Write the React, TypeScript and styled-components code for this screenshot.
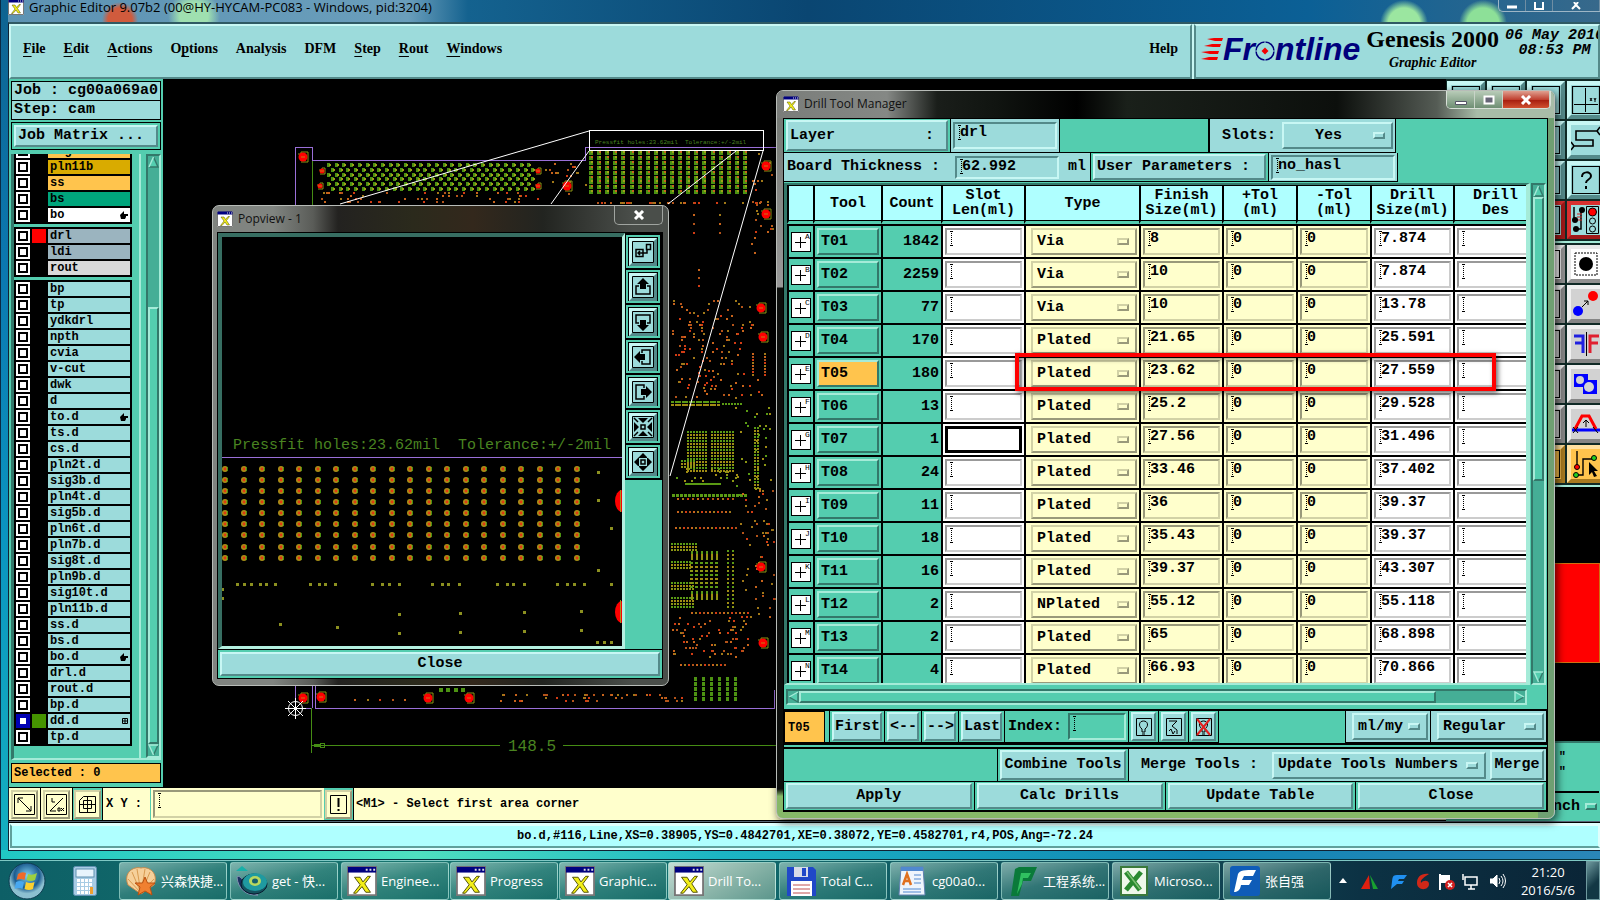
import { ReactNode } from 'react';
import { createGlobalStyle, css, styled } from 'styled-components';

const TEAL = '#54cdaf';
const TEAL_LIGHT = '#a5ebd8';
const TEAL_DARK = '#33786a';
const CYAN = '#9cdbdb';
const CYAN_LIGHT = '#c8f7f4';
const CYAN_DARK = '#548a8a';
const AQUA = '#afffff';
const CREAM = '#ffffcc';
const GOLD = '#ffc44d';

type Tone = 'cyan' | 'teal' | 'cream' | 'white' | 'gold';

const tones: Record<Tone, { bg: string; light: string; dark: string }> = {
  cyan: { bg: CYAN, light: CYAN_LIGHT, dark: CYAN_DARK },
  teal: { bg: TEAL, light: TEAL_LIGHT, dark: TEAL_DARK },
  cream: { bg: CREAM, light: '#d2d2a6', dark: '#99997a' },
  white: { bg: '#ffffff', light: '#cccccc', dark: '#999999' },
  gold: { bg: GOLD, light: TEAL_LIGHT, dark: TEAL_DARK },
};

const raised = (tone: Tone) => css`
  background: ${tones[tone].bg};
  border: 2px solid;
  border-color: ${tones[tone].light} ${tones[tone].dark} ${tones[tone].dark} ${tones[tone].light};
`;

const sunken = (tone: Tone) => css`
  background-color: ${tones[tone].bg};
  border: 2px solid;
  border-color: ${tones[tone].dark} ${tones[tone].light} ${tones[tone].light} ${tones[tone].dark};
`;

const GlobalStyle = createGlobalStyle`
  *,
  *::before,
  *::after {
    box-sizing: border-box;
  }

  body {
    margin: 0;
    background: #0b4f6e;
    color: #000;
    font: bold 15px/18px 'Liberation Mono', monospace;
  }

  button,
  input,
  select {
    margin: 0;
    padding: 0;
    border: 0;
    border-radius: 0;
    background: none;
    color: inherit;
    font: inherit;
    outline: none;
  }

  button {
    cursor: pointer;
  }
`;

/* ---------- data ---------- */

interface Layer {
  name: string;
  color?: string;
  swatch?: string;
  mark?: 'hand' | 'grid';
  active?: boolean;
}

const layerGroups: Layer[][] = [
  [
    { name: 'sig10t', color: GOLD },
    { name: 'pln11b', color: '#d9ab00' },
    { name: 'ss', color: GOLD },
    { name: 'bs', color: '#00a57c' },
    { name: 'bo', color: '#ffffff', mark: 'hand' },
  ],
  [
    { name: 'drl', color: '#9bb4bf', swatch: '#ff0000' },
    { name: 'ldi', color: '#9bb4bf' },
    { name: 'rout', color: '#d9d9d9' },
  ],
  [
    { name: 'bp' },
    { name: 'tp' },
    { name: 'ydkdrl' },
    { name: 'npth' },
    { name: 'cvia' },
    { name: 'v-cut' },
    { name: 'dwk' },
    { name: 'd' },
    { name: 'to.d', mark: 'hand' },
    { name: 'ts.d' },
    { name: 'cs.d' },
    { name: 'pln2t.d' },
    { name: 'sig3b.d' },
    { name: 'pln4t.d' },
    { name: 'sig5b.d' },
    { name: 'pln6t.d' },
    { name: 'pln7b.d' },
    { name: 'sig8t.d' },
    { name: 'pln9b.d' },
    { name: 'sig10t.d' },
    { name: 'pln11b.d' },
    { name: 'ss.d' },
    { name: 'bs.d' },
    { name: 'bo.d', mark: 'hand' },
    { name: 'drl.d' },
    { name: 'rout.d' },
    { name: 'bp.d' },
    { name: 'dd.d', swatch: '#459400', mark: 'grid', active: true },
    { name: 'tp.d' },
  ],
];

const menus: [string, number][] = [
  ['File', 0],
  ['Edit', 0],
  ['Actions', 0],
  ['Options', 1],
  ['Analysis', -1],
  ['DFM', -1],
  ['Step', 0],
  ['Rout', 0],
  ['Windows', 0],
];

const tools = [
  { id: 'T01', count: 1842, type: 'Via', finish: '8', drill: '7.874' },
  { id: 'T02', count: 2259, type: 'Via', finish: '10', drill: '7.874' },
  { id: 'T03', count: 77, type: 'Via', finish: '10', drill: '13.78' },
  { id: 'T04', count: 170, type: 'Plated', finish: '21.65', drill: '25.591' },
  { id: 'T05', count: 180, type: 'Plated', finish: '23.62', drill: '27.559' },
  { id: 'T06', count: 13, type: 'Plated', finish: '25.2', drill: '29.528' },
  { id: 'T07', count: 1, type: 'Plated', finish: '27.56', drill: '31.496' },
  { id: 'T08', count: 24, type: 'Plated', finish: '33.46', drill: '37.402' },
  { id: 'T09', count: 11, type: 'Plated', finish: '36', drill: '39.37' },
  { id: 'T10', count: 18, type: 'Plated', finish: '35.43', drill: '39.37' },
  { id: 'T11', count: 16, type: 'Plated', finish: '39.37', drill: '43.307' },
  { id: 'T12', count: 2, type: 'NPlated', finish: '55.12', drill: '55.118' },
  { id: 'T13', count: 2, type: 'Plated', finish: '65', drill: '68.898' },
  { id: 'T14', count: 4, type: 'Plated', finish: '66.93', drill: '70.866' },
];

const CURRENT_TOOL = 'T05';
const FOCUSED_TOOL = 'T07';

/* ---------- shared controls ---------- */

const BevelButton = styled.button<{ $tone?: Tone }>`
  ${({ $tone = 'cyan' }) => raised($tone)}
  display: flex;
  align-items: center;
  justify-content: center;
  min-width: 0;
  white-space: pre;
`;

const TextField = styled.input<{ $tone?: Tone; $focused?: boolean }>`
  ${({ $tone = 'cyan' }) => sunken($tone)}
  display: block;
  width: 100%;
  height: 27px;
  min-width: 0;
  padding: 0 2px 6px 5px;
  background-image: ${({ $focused }) =>
    $focused
      ? 'none'
      : `linear-gradient(#000, #000), linear-gradient(#000, #000),
         repeating-linear-gradient(#000 0 1px, transparent 1px 2px)`};
  background-repeat: no-repeat;
  background-size: 3px 1px, 3px 1px, 1px 14px;
  background-position: 3px 1px, 3px 15px, 4px 1px;
  ${({ $focused }) => $focused && 'border: 3px solid #000;'}
`;

const MenuBox = styled.span<{ $tone?: Tone }>`
  ${({ $tone = 'cyan' }) => raised($tone)}
  display: flex;
  align-items: center;
  gap: 4px;
  height: 27px;
  padding: 0 6px 0 4px;

  &::after {
    content: '';
    flex: none;
    width: 12px;
    height: 7px;
    ${({ $tone = 'cyan' }) => raised($tone)}
  }
`;

const MenuSelect = styled.select<{ $center?: boolean }>`
  appearance: none;
  flex: 1;
  width: 100%;
  min-width: 0;
  text-align-last: ${({ $center }) => ($center ? 'center' : 'left')};
`;

interface OptionMenuProps {
  label: string;
  value: string;
  tone?: Tone;
  center?: boolean;
}

function OptionMenu({ label, value, tone, center }: OptionMenuProps) {
  return (
    <MenuBox $tone={tone}>
      <MenuSelect aria-label={label} $center={center}>
        <option>{value}</option>
      </MenuSelect>
    </MenuBox>
  );
}

const Scroll = styled.div<{ $horizontal?: boolean }>`
  ${sunken('teal')}
  display: flex;
  flex: none;
  flex-direction: ${({ $horizontal }) => ($horizontal ? 'row' : 'column')};
  ${({ $horizontal }) => ($horizontal ? 'height: 16px;' : 'width: 15px;')}
  background-color: #45ae96;
`;

const Thumb = styled.div<{ $grow: number }>`
  ${raised('teal')}
  flex: ${({ $grow }) => $grow} 1 0;
`;

const Track = styled.div<{ $grow: number }>`
  flex: ${({ $grow }) => $grow} 1 0;
`;

const arrows = {
  up: ['M5.5 1 L1 11 H10 Z', 'M5.5 1 L1 11', 'M1 11 H10 L5.5 1'],
  down: ['M5.5 11 L1 1 H10 Z', 'M5.5 11 L1 1 H10', 'M10 1 L5.5 11'],
  left: ['M1 6 L10 1 V11 Z', 'M1 6 L10 1', 'M10 1 V11 L1 6'],
  right: ['M10 6 L1 1 V11 Z', 'M10 6 L1 1 V11', 'M1 11 L10 6'],
};

function Arrow({ to }: { to: keyof typeof arrows }) {
  const [fill, light, dark] = arrows[to];
  return (
    <svg width="11" height="12" viewBox="0 0 11 12">
      <path d={fill} fill={TEAL} />
      <path d={dark} fill="none" stroke={TEAL_DARK} strokeWidth="1.4" />
      <path d={light} fill="none" stroke={TEAL_LIGHT} strokeWidth="1.4" />
    </svg>
  );
}

interface ScrollBarProps {
  before: number;
  thumb: number;
  after: number;
  horizontal?: boolean;
}

function ScrollBar({ before, thumb, after, horizontal }: ScrollBarProps) {
  return (
    <Scroll $horizontal={horizontal}>
      <Arrow to={horizontal ? 'left' : 'up'} />
      <Track $grow={before} />
      <Thumb $grow={thumb} />
      <Track $grow={after} />
      <Arrow to={horizontal ? 'right' : 'down'} />
    </Scroll>
  );
}

function AppIcon({ size = 16 }: { size?: number }) {
  return (
    <svg width={size} height={size} viewBox="0 0 32 32">
      <rect x="0" y="0" width="32" height="32" fill="#fff" />
      <path d="M1 1 V31 H31 V1 Z" fill="none" stroke="#777" strokeWidth="2" />
      <rect x="1" y="1" width="30" height="6" fill="#000080" />
      <path d="M20 3 h2 v2 h-2 z M24 3 h2 v2 h-2 z M28 3 h2 v2 h-2 z" fill="#ddd" />
      <path
        d="M8 12 H14 L17 17 L22 11 H25 L19 19 L25 28 H20 L16 22 L10 29 H7 L14 20 Z"
        fill="#f2ee18"
        stroke="#4a4a00"
      />
    </svg>
  );
}

/* ---------- editor window ---------- */

const Desktop = styled.div`
  position: relative;
  display: flex;
  flex-direction: column;
  height: 100vh;
  overflow: hidden;
  background: linear-gradient(#0e6390 0%, #0b78b0 30%, #0a95c0 60%, #16b4c0 100%);
`;

const EditorWindow = styled.main`
  display: flex;
  flex: 1;
  flex-direction: column;
  min-height: 0;
  padding: 0 0 8px 7px;
  border-left: 1px solid #0a2a44;
  border-bottom: 1px solid #06323c;
  background: linear-gradient(90deg, #20c8c4, #4fe0c0 26%, #1cb5c4 45%, #1186b4 75%, #2a86b8) bottom / 100% 9px
    no-repeat;
`;

const EditorTitle = styled.header`
  display: flex;
  flex: none;
  align-items: center;
  gap: 5px;
  height: 22px;
  padding: 0 0 8px 0;
  font: 13px/14px 'Open Sans', sans-serif;
  background: radial-gradient(circle at 112px 20px, #d05b3d 0 12px, transparent 18px),
    radial-gradient(circle at 186px 16px, #9fe0b0 0 14px, transparent 26px),
    radial-gradient(circle at 1396px 24px, #9be6a0 0 16px, transparent 24px),
    radial-gradient(circle at 1475px 24px, #8de098 0 16px, transparent 24px),
    linear-gradient(90deg, #5d93b3 0, #6a9ebb 400px, #14628f 460px, #0a4672 800px, #0b6096 1300px, #37698b 100%);
`;

const EditorControls = styled.div`
  display: flex;
  align-self: flex-start;
  margin-left: auto;
  height: 12px;
  border: 1px solid #9db6c6;
  border-top: 0;
  border-right: 0;
  border-radius: 0 0 0 5px;
`;

const EditorControl = styled.button<{ $wide?: boolean }>`
  display: grid;
  place-items: center;
  width: ${({ $wide }) => ($wide ? 47 : 27)}px;
  border-right: 1px solid #6f8ea3;
`;

const EditorFrame = styled.div`
  display: flex;
  flex: 1;
  flex-direction: column;
  min-height: 0;
  border: 1px solid #123;
  border-top: 2px solid #2f5a64;
  border-right: 0;
  background: #000;
`;

const TopRow = styled.div`
  display: flex;
  flex: none;
  height: 55px;
  background: ${CYAN_LIGHT};
`;

const MenuBar = styled.nav`
  ${raised('cyan')}
  display: flex;
  flex: 1;
  align-items: center;
  gap: 18px;
  margin-right: 2px;
  padding: 0 12px 5px;
  font: bold 14px/20px 'Liberation Serif', serif;
`;

const MenuItem = styled.button<{ $end?: boolean }>`
  ${({ $end }) => $end && 'margin-left: auto;'}

  span {
    text-decoration: underline;
    text-underline-offset: 3px;
  }
`;

const Brand = styled.div`
  ${raised('cyan')}
  border-left: 2px solid ${CYAN_DARK};
  display: flex;
  flex: none;
  gap: 6px;
  width: 406px;
  padding-left: 5px;
  overflow: hidden;
  white-space: pre;
`;

const Logo = styled.div`
  display: flex;
  align-items: center;
  align-self: flex-start;
  color: #00007c;
  font: italic bold 32px/46px 'Liberation Sans', sans-serif;
`;

const Product = styled.div`
  display: flex;
  flex-direction: column;
  align-items: center;
  font: bold 24px/26px 'Liberation Serif', serif;
`;

const ProductSub = styled.em`
  font-size: 14px;
  line-height: 22px;
`;

const Clock = styled.div`
  padding-top: 2px;
  font-style: italic;
  line-height: 15px;
  text-align: center;
`;

function FrontlineLogo() {
  return (
    <Logo>
      <svg width="22" height="28" viewBox="0 0 22 28">
        <g fill="#f20000">
          <path d="M6 4 L13 3 H22 L21 6 H14 Z" />
          <path d="M3 11 L11 9 H20 L19 12 H12 Z" />
          <path d="M0 17 L9 16 H18 L17 19 H9 Z" />
          <path d="M0 24 L8 22 H17 L16 25 H8 Z" />
        </g>
      </svg>
      Fr
      <svg width="20" height="28" viewBox="0 0 20 28">
        <circle cx="10" cy="16" r="9" fill="none" stroke="#00007c" strokeWidth="1.5" />
        <path d="M10 6 V12 M10 20 V26 M0 16 H6 M14 16 H20" stroke="#9cdbdb" />
        <path d="M10 12.500 L13.500 16 L10 19.500 L6.500 16 Z" fill="#f20000" />
      </svg>
      ntline
    </Logo>
  );
}

const MainRow = styled.div`
  display: flex;
  flex: 1;
  min-height: 0;
`;

const LeftPart = styled.div`
  display: flex;
  flex: 1;
  flex-direction: column;
  min-width: 0;
`;

const WorkRow = styled.div`
  display: flex;
  flex: 1;
  min-height: 0;
`;

const Sidebar = styled.aside`
  display: flex;
  flex: none;
  flex-direction: column;
  width: 154px;
  padding: 2px 2px 4px;
  background: ${TEAL};
`;

const InfoBox = styled.div`
  flex: none;
  height: 20px;
  margin-bottom: -1px;
  padding-left: 2px;
  border: 1px solid #000;
  background: ${CYAN};
  white-space: pre;
`;

const MatrixBox = styled.div`
  display: grid;
  flex: none;
  height: 28px;
  margin: 3px 0 4px;
  padding: 2px;
  border: 1px solid #000;

  button {
    justify-content: flex-start;
    padding-left: 2px;
  }
`;

const LayerArea = styled.div`
  display: flex;
  flex: 1;
  gap: 5px;
  min-height: 0;
  border-left: 3px solid ${TEAL_DARK};
  border-bottom: 2px solid ${TEAL_LIGHT};
`;

/* anchored to its last row, so the first group runs out of the top */
const LayerView = styled.div`
  display: flex;
  flex: 1;
  flex-direction: column;
  justify-content: flex-end;
  gap: 3px;
  padding-bottom: 12px;
  overflow: hidden;
  border-right: 2px solid ${TEAL_LIGHT};
  background: ${TEAL};
`;

const LayerGroup = styled.ul`
  flex: none;
  width: 118px;
  margin: 0;
  padding: 0 2px 2px;
  background: #000;
  list-style: none;
`;

const LayerRow = styled.li`
  display: grid;
  grid-template-columns: 14px 14px 1fr;
  gap: 2px;
  height: 16px;
  padding-top: 2px;
  font-size: 12px;
  line-height: 14px;
`;

const LayerCheck = styled.input<{ $active?: boolean }>`
  appearance: none;
  width: 14px;
  height: 14px;
  border: 2px solid ${({ $active }) => ($active ? '#0000b4' : '#fff')};
  background: #fff;
  box-shadow: inset 0 0 0 2px ${({ $active }) => ($active ? '#0000b4' : '#000')};
`;

const Swatch = styled.span<{ $color?: string }>`
  background: ${({ $color }) => $color ?? '#000'};
`;

const LayerName = styled.label<{ $color?: string }>`
  display: flex;
  align-items: center;
  justify-content: space-between;
  padding: 0 2px;
  background: ${({ $color }) => $color ?? CYAN};
`;

const SelectedBox = styled.div`
  flex: none;
  height: 20px;
  margin-top: 3px;
  padding-left: 2px;
  border: 1px solid #000;
  background: ${GOLD};
  font-size: 12px;
  white-space: pre;
`;

function LayerMark({ kind }: { kind: 'hand' | 'grid' }) {
  if (kind === 'grid') {
    return (
      <svg width="6" height="6" viewBox="0 0 6 6">
        <path d="M0.500 0.500 H5.500 V5.500 H0.500 Z M3 0 V6 M0 3 H6" fill="none" stroke="#000" />
      </svg>
    );
  }
  return (
    <svg width="8" height="8" viewBox="0 0 8 8">
      <path d="M0 4 L4 0 V3 H8 V5 H6 V6 L5 8 H1 Z" />
    </svg>
  );
}

function LayerPanel() {
  return (
    <Sidebar>
      <InfoBox>Job : cg00a069a0</InfoBox>
      <InfoBox>Step: cam</InfoBox>
      <MatrixBox>
        <BevelButton>Job Matrix ...</BevelButton>
      </MatrixBox>
      <LayerArea>
        <LayerView>
          {layerGroups.map((group, index) => (
            <LayerGroup key={index}>
              {group.map((layer) => (
                <LayerRow key={layer.name}>
                  <LayerCheck type="checkbox" id={`layer-${layer.name}`} $active={layer.active} />
                  <Swatch $color={layer.swatch} />
                  <LayerName htmlFor={`layer-${layer.name}`} $color={layer.color}>
                    {layer.name}
                    {layer.mark && <LayerMark kind={layer.mark} />}
                  </LayerName>
                </LayerRow>
              ))}
            </LayerGroup>
          ))}
        </LayerView>
        <ScrollBar before={141} thumb={440} after={0} />
      </LayerArea>
      <SelectedBox>Selected : 0</SelectedBox>
    </Sidebar>
  );
}

/* ---------- board drawing ---------- */

interface Dot {
  x: number;
  y: number;
  w?: number;
  h?: number;
  c: string;
}

const COPPER = ['#c8641c', '#b4541a', '#d23c14', '#a07818'];
const MASK = ['#5a9a14', '#8c9614', '#a08c14'];

function random(seed: number) {
  let s = seed * 7919;
  return () => {
    s = (s * 16807) % 2147483647;
    return s / 2147483647;
  };
}

function scatter(seed: number, x: number, y: number, w: number, h: number, n: number, colors = COPPER) {
  const next = random(seed);
  return Array.from({ length: n }, (): Dot => ({
    x: Math.round(x + next() * w),
    y: Math.round(y + Math.floor((next() * h) / 3) * 3),
    c: colors[Math.floor(next() * colors.length)],
  }));
}

function matrix(x: number, y: number, cols: number, rows: number, dx: number, dy: number, w: number, h: number, colors = MASK) {
  const dots: Dot[] = [];
  for (let r = 0; r < rows; r++) {
    for (let c = 0; c < cols; c++) {
      dots.push({ x: Math.round(x + c * dx), y: Math.round(y + r * dy), w, h, c: colors[(r * 5 + c * 3) % colors.length] });
    }
  }
  return dots;
}

const GREEN = ['#4c9212'];

const connector = [165, 170, 175, 179, 184, 189].flatMap((y, r) => [
  ...matrix(r % 2 ? 331 : 327, y - 2, 27, 1, 7.7, 1, 3, 4, GREEN),
  ...matrix(r % 2 ? 333 : 329, y - 1, 27, 1, 7.7, 1, 2, 2, ['#a0a018', '#c8641c', '#5a9a14']),
]);

const pressfit = [...matrix(589, 151, 20, 9, 8.1, 4.9, 4, 4, GREEN), ...matrix(591, 151, 20, 9, 8.1, 4.9, 2, 2, ['#a0a018', '#c8641c'])];

const boardDots: Dot[] = [
  ...connector,
  ...pressfit,
  ...scatter(7, 316, 192, 232, 12, 60),
  ...scatter(11, 545, 163, 42, 38, 18),
  ...scatter(12, 590, 202, 170, 3, 34),
  ...matrix(693, 214, 2, 3, 26, 9, 2, 2, COPPER),
  ...matrix(698, 269, 1, 3, 1, 8, 2, 2, COPPER),
  ...scatter(15, 750, 150, 22, 110, 26),
  ...scatter(19, 672, 300, 80, 34, 46),
  ...scatter(23, 672, 330, 70, 36, 54),
  ...scatter(24, 672, 360, 34, 38, 22),
  ...matrix(752, 353, 2, 8, 12, 3, 2, 2, COPPER),
  ...scatter(29, 705, 370, 66, 28, 26),
  ...matrix(671, 401, 14, 2, 3.5, 3, 3, 2),
  ...matrix(722, 403, 7, 1, 3, 3, 2, 2),
  ...scatter(31, 734, 407, 38, 90, 34, MASK),
  ...matrix(687, 431, 7, 14, 3, 3, 2, 2),
  ...matrix(711, 431, 8, 14, 3, 3, 2, 2),
  ...matrix(681, 460, 5, 3, 3, 3, 2, 2),
  ...matrix(754, 427, 2, 21, 3, 3, 2, 2),
  ...scatter(37, 672, 468, 64, 14, 22, MASK),
  ...matrix(685, 483, 12, 1, 3, 3, 3, 2),
  ...matrix(672, 494, 19, 1, 4, 3, 3, 3),
  ...matrix(677, 498, 12, 1, 5, 3, 2, 2, COPPER),
  ...matrix(677, 511, 14, 1, 4, 3, 2, 2, COPPER),
  ...matrix(675, 527, 16, 1, 4, 3, 2, 2, COPPER),
  ...scatter(41, 740, 490, 34, 130, 60),
  ...matrix(671, 543, 9, 3, 3, 3, 2, 2),
  ...matrix(671, 561, 7, 3, 3, 3, 2, 2),
  ...matrix(671, 582, 8, 3, 3, 3, 2, 2),
  ...matrix(671, 597, 8, 4, 3, 3, 2, 2),
  ...matrix(691, 551, 6, 3, 5, 3, 2, 3),
  ...matrix(690, 562, 6, 7, 5, 4, 3, 2),
  ...matrix(691, 591, 6, 3, 5, 3, 2, 3),
  ...matrix(727, 550, 2, 15, 5, 4, 2, 2),
  ...matrix(691, 612, 15, 1, 4, 3, 2, 2, COPPER),
  ...scatter(43, 671, 617, 78, 40, 74),
  ...matrix(680, 664, 12, 1, 4, 3, 2, 2, COPPER),
  ...matrix(694, 677, 6, 5, 8, 5, 3, 4, GREEN),
  ...matrix(354, 699, 5, 1, 12.6, 1, 2, 2, COPPER),
  ...scatter(47, 492, 694, 190, 8, 50),
  ...matrix(439, 688, 4, 1, 7.3, 1, 4, 4, GREEN),
];

const pads = [
  [303, 157],
  [322, 171],
  [320, 186],
  [538, 171],
  [538, 186],
  [567, 186],
  [766, 166],
  [766, 214],
  [761, 308],
  [763, 337],
  [761, 567],
  [763, 643],
  [303, 698],
  [321, 697],
  [428, 698],
  [469, 698],
];

const Canvas = styled.svg`
  flex: 1;
  min-width: 0;
  height: auto;
  background: #000;
`;

const CadText = styled.text`
  fill: #4a8420;
  font-family: 'Liberation Mono', monospace;
  font-weight: normal;
  white-space: pre;
`;

function Dots({ dots }: { dots: Dot[] }) {
  return (
    <g shapeRendering="crispEdges">
      {dots.map((d, i) => (
        <rect key={i} x={d.x} y={d.y} width={d.w ?? 2} height={d.h ?? 2} fill={d.c} />
      ))}
    </g>
  );
}

function Board() {
  return (
    <Canvas>
      <g transform="translate(-163 -79)">
        <Dots dots={boardDots} />
        {pads.map(([x, y], i) => {
          const r = i > 0 && i < 5 ? 3 : 5;
          return (
            <g key={i}>
              <path d={`M${x - r} ${y - r + 2} h3 v-2 h${r * 2 - 3} v${r * 2} h-${r + 2}`} fill="none" stroke="#8c9614" />
              <circle cx={x} cy={y} r={r - 0.500} fill="#ff0000" />
              <path d={`M${x - 2} ${y} h4`} stroke="#c87818" />
            </g>
          );
        })}
        <g fill="none" stroke="#9a6fd8" shapeRendering="crispEdges">
          <path d="M295.500 708 V147.500 H312 V160.500 H585.500 V147.500 H776" />
          <path d="M315.500 680 V708.500 H774.500 V690 M295 708.500 H312 M312.500 680 V708" />
        </g>
        <g fill="none" stroke="#fff">
          <path d="M589.500 130.500 H763.500 V150.500 H589.500 Z" shapeRendering="crispEdges" />
          <path d="M589 131 L340 204 M589 151 L551 204 M736 151 L668 204 M763 151 L670 476" />
          <circle cx="295.500" cy="708.500" r="7" />
          <path d="M285 708.500 H306 M295.500 698 V719 M288 701 L303 716 M303 701 L288 716" />
        </g>
        <CadText x="595" y="144" fontSize="6">
          {'Pressfit holes:23.62mil  Tolerance:+/-2mil'}
        </CadText>
        <g fill="none" stroke="#458c14" shapeRendering="crispEdges">
          <path d="M312.500 161 V205 M311.500 708 V753 M312 745.500 H500 M563 745.500 H776" />
          <path d="M314 745 H324 M320 743.500 H324.500 V747.500 H320 Z" />
          <path d="M314 745.500 H321" strokeWidth="3" />
        </g>
        <CadText x="508" y="751" fontSize="16">
          148.5
        </CadText>
      </g>
    </Canvas>
  );
}

/* ---------- command and status bars ---------- */

const CommandBar = styled.div`
  display: flex;
  flex: none;
  height: 34px;
  border-top: 1px solid #000;
  border-bottom: 1px solid #000;
  background: ${CREAM};
  font-size: 12px;
`;

const CommandCell = styled.div<{ $teal?: boolean }>`
  display: grid;
  flex: none;
  place-items: center;
  width: ${({ $teal }) => ($teal ? 30 : 32)}px;
  border-right: 1px solid #000;
  background: ${({ $teal }) => ($teal ? TEAL : CREAM)};
`;

const CommandButton = styled(BevelButton)`
  width: 27px;
  height: 29px;
  color: #000;
`;

const CoordLabel = styled.label`
  display: flex;
  flex: none;
  align-items: center;
  padding: 0 8px 0 3px;
  border-right: 1px solid ${TEAL};
  white-space: pre;
`;

const CoordField = styled(TextField)`
  flex: none;
  width: 169px;
  height: 28px;
  margin: 2px;
`;

const Prompt = styled.output`
  display: flex;
  align-items: center;
  padding-left: 2px;
  white-space: pre;
`;

const StatusBar = styled.footer`
  display: grid;
  flex: none;
  height: 29px;
  padding: 2px 0 2px 1px;
  border-top: 1px solid #567;
  background: linear-gradient(#000 0 1px, #dff 1px 100%);
`;

const StatusText = styled.div`
  border: 2px solid;
  border-color: #dffffd #dffffd #5fa09c #5fa09c;
  background: ${AQUA};
  font-size: 12px;
  line-height: 20px;
  text-align: center;
`;

function CommandRow() {
  return (
    <CommandBar>
      <CommandCell>
        <CommandButton $tone="cream" aria-label="Pan">
          <svg width="21" height="21" viewBox="0 0 21 21" fill="none" stroke="#000">
            <path d="M0.500 0.500 H20.500 V20.500 H0.500 Z M4 4 L17 17 M4 9 V4 H9 M17 12 V17 H12" />
          </svg>
        </CommandButton>
      </CommandCell>
      <CommandCell>
        <CommandButton $tone="cream" aria-label="Angle">
          <svg width="21" height="21" viewBox="0 0 21 21" fill="none" stroke="#000">
            <path d="M0.500 0.500 H20.500 V20.500 H0.500 Z M4 17 L17 4 M4 17 H10 M6 4 V8 H9 M12 14 H14 V17 H12 Z M18 14 L15 17 M15 14 L18 17" />
          </svg>
        </CommandButton>
      </CommandCell>
      <CommandCell $teal>
        <CommandButton $tone="cream" aria-label="Grid">
          <svg width="19" height="19" viewBox="0 0 19 19" fill="none" stroke="#000">
            <path d="M5.500 1.500 H17.500 V17.500 H1.500 V5.500 Z M5.500 5.500 H13.500 V13.500 H5.500 Z M9.500 1 V18 M1 9.500 H18" />
          </svg>
        </CommandButton>
      </CommandCell>
      <CoordLabel htmlFor="coords">X Y :</CoordLabel>
      <CoordField id="coords" $tone="cream" defaultValue="" />
      <CommandCell $teal>
        <CommandButton $tone="cream" aria-label="Alerts">
          <svg width="17" height="19" viewBox="0 0 17 19" fill="none" stroke="#000">
            <path d="M0.500 0.500 H16.500 V18.500 H0.500 Z" />
            <path d="M8.500 3 V12 M8.500 14 V16" strokeWidth="2" />
          </svg>
        </CommandButton>
      </CommandCell>
      <Prompt>{'<M1> - Select first area corner'}</Prompt>
    </CommandBar>
  );
}

/* ---------- right tool palette ---------- */

const Palette = styled.div`
  flex: none;
  display: flex;
  flex-direction: column;
  width: 154px;
  overflow: hidden;
`;

const PaletteGrid = styled.div`
  display: grid;
  grid-template-columns: repeat(4, 38px);
  grid-auto-rows: 38px;
  gap: 2px;
  flex: none;
  padding: 2px 0 2px 1px;
  background: #102a26;
  border-bottom: 2px solid ${TEAL_LIGHT};
`;

const toolColors: Record<string, [string, string, string]> = {
  cyan: [CYAN, CYAN_LIGHT, CYAN_DARK],
  red: [CYAN, '#d83030', '#a01818'],
  gray: ['#d2d2d2', '#f0f0f0', '#858585'],
  white: ['#ffffff', '#e8e8e8', '#909090'],
  gold: [GOLD, '#ffe0a0', '#a87a20'],
};

const PaletteButton = styled.button<{ $kind: string }>`
  display: grid;
  place-items: center;
  border: 4px solid;
  border-color: ${({ $kind }) => {
    const [, light, dark] = toolColors[$kind];
    return `${light} ${dark} ${dark} ${light}`;
  }};
  background: ${({ $kind }) => toolColors[$kind][0]};
`;

const PaletteRest = styled.div`
  display: flex;
  flex: 1;
  flex-direction: column;
  padding-top: 76px;
  background: #000;
`;

const RedBlock = styled.div`
  height: 100px;
  border: 1px solid #d07010;
  background: #ff0000;
`;

const Readout = styled.div`
  display: grid;
  grid-template-rows: 15px 15px 1fr;
  justify-items: end;
  height: 80px;
  margin-top: auto;
  padding: 5px 1px 1px;
  border-top: 2px solid ${TEAL_DARK};
  background: ${TEAL};
  font-size: 12px;

  & > span {
    padding-right: 33px;
  }
`;

const UnitMenu = styled.div`
  align-self: end;
  width: 104px;
  border-top: 2px solid #000;
  font-size: 15px;

  ${MenuBox} {
    border-color: transparent;
    padding: 0 0 0 47px;
  }
`;

const iconFrame = <path d="M1.500 1.500 H28.500 V28.500 H1.500 Z" fill="none" stroke="#000" strokeWidth="1.2" />;

interface PaletteRow {
  kind: string;
  name: string;
  icon: ReactNode;
}

const viewTools: PaletteRow[] = [
  {
    kind: 'cyan',
    name: 'Coordinates',
    icon: (
      <>
        {iconFrame}
        <path d="M14.500 3 V27 M3 19.500 H27" stroke="#000" fill="none" />
        <path d="M19 13 l2 3 m0 -3 l-2 3 M23 13 l1 2 l1 -2 m-1 2 v2" stroke="#000" fill="none" />
      </>
    ),
  },
  {
    kind: 'cyan',
    name: 'Net path',
    icon: (
      <path
        d="M2 21 H22 V15 H5 V6 H26 M29 2 L26 6 L29 10 M0 17 L3 21 L0 25"
        stroke="#000"
        strokeWidth="1.6"
        fill="none"
      />
    ),
  },
  {
    kind: 'cyan',
    name: 'Help',
    icon: (
      <>
        {iconFrame}
        <path d="M11 12 C11 6 20 6 20 11 C20 15 15 14 15 18 M15 21 V24" stroke="#000" strokeWidth="2" fill="none" />
      </>
    ),
  },
  {
    kind: 'red',
    name: 'Traffic light',
    icon: (
      <>
        <path d="M3 2 V14 M10 4 V24 H5" stroke="#000" fill="none" strokeWidth="1.5" />
        <path d="M6 9 H11 M6 12 H11 M6 15 H11" stroke="#d02020" />
        <circle cx="4" cy="15" r="3" />
        <circle cx="11" cy="5" r="3" />
        <circle cx="5" cy="24" r="3" />
        <path d="M15.500 1.500 H27.500 V28.500 H15.500 Z" fill="none" stroke="#000" />
        <circle cx="21.500" cy="7" r="4" fill="#ff0000" stroke="#000" />
        <circle cx="21.500" cy="16" r="3" fill="none" stroke="#000" />
        <circle cx="21.500" cy="24" r="3" fill="none" stroke="#000" />
      </>
    ),
  },
];

const editTools: PaletteRow[] = [
  {
    kind: 'white',
    name: 'Pad',
    icon: (
      <>
        <path d="M4 4 H26 V26 H4 Z" fill="none" stroke="#000" strokeDasharray="2 1" />
        <circle cx="15" cy="15" r="7" />
      </>
    ),
  },
  {
    kind: 'gray',
    name: 'Move',
    icon: (
      <>
        <circle cx="7" cy="22" r="5" fill="#0000ff" />
        <circle cx="22" cy="7" r="5" fill="#ff0000" />
        <path d="M11 18 L17 12 M13 12 H17 V16" fill="none" stroke="#000" />
      </>
    ),
  },
  {
    kind: 'gray',
    name: 'Mirror',
    icon: (
      <>
        <path d="M3 7 H12 V24 M4 14 H12" fill="none" stroke="#2020e0" strokeWidth="3" />
        <path d="M15.500 3 V27" stroke="#000" />
        <path d="M28 7 H19 V24 M27 14 H19" fill="none" stroke="#e02030" strokeWidth="3" />
      </>
    ),
  },
  {
    kind: 'gray',
    name: 'Group',
    icon: (
      <>
        <path d="M3 5 H17 V11 H26 V25 H12 V18 H3 Z" fill="#0000ff" />
        <circle cx="9" cy="11" r="4" fill="#d2d2d2" />
        <circle cx="18" cy="18" r="5" fill="#d2d2d2" />
      </>
    ),
  },
  {
    kind: 'gray',
    name: 'Reshape',
    icon: (
      <>
        <path d="M1 21 H29" stroke="#0000ff" strokeWidth="3" />
        <path d="M4 20 L11 7 H18 L25 20" fill="none" stroke="#ff0000" strokeWidth="3" />
        <path d="M15 18 V11 M12 14 L15 11 L18 14 M2 18 l5 6 M2 24 l5 -6 M22 18 l5 6" fill="none" stroke="#000" />
      </>
    ),
  },
  {
    kind: 'gold',
    name: 'Reroute',
    icon: (
      <>
        <path d="M6 2 V18 M7 26 H12 V10 H22" fill="none" stroke="#000" strokeWidth="1.400" />
        <circle cx="6" cy="18" r="2.500" fill="#ff0000" stroke="#000" />
        <circle cx="5" cy="26" r="2.500" fill="#20d020" stroke="#000" />
        <circle cx="23" cy="9" r="2.500" fill="#20d020" stroke="#000" />
        <path d="M18 13 V26 L21 23 L23 28 L26 27 L23 22 H27 Z" />
      </>
    ),
  },
];

function PaletteSection({ rows }: { rows: PaletteRow[] }) {
  return (
    <PaletteGrid>
      {rows.flatMap((row) =>
        [0, 1, 2, 3].map((col) => (
          <PaletteButton key={`${row.name}${col}`} $kind={row.kind} aria-label={`${row.name} ${col + 1}`}>
            <svg width="30" height="30" viewBox="0 0 30 30">
              {col === 3 ? row.icon : iconFrame}
            </svg>
          </PaletteButton>
        )),
      )}
    </PaletteGrid>
  );
}

function ToolPalette() {
  return (
    <Palette>
      <PaletteSection rows={viewTools} />
      <PaletteSection rows={editTools} />
      <PaletteRest>
        <RedBlock />
        <Readout>
          <span>"</span>
          <span>"</span>
          <UnitMenu>
            <OptionMenu label="Units" value="Inch" tone="teal" />
          </UnitMenu>
        </Readout>
      </PaletteRest>
    </Palette>
  );
}

/* ---------- floating windows ---------- */

const FloatingWindow = styled.section`
  position: absolute;
  border: 1px solid #b8bcb8;
  border-radius: 7px;
  background: #222622;
`;

const WindowTitle = styled.header`
  display: flex;
  align-items: center;
  gap: 5px;
  height: 26px;
  color: #111;
  font: 12px/16px 'Open Sans', sans-serif;
`;

const PopWindow = styled(FloatingWindow)`
  top: 205px;
  left: 212px;
  width: 457px;
  padding: 0 5px 6px 4px;
  background: linear-gradient(90deg, #808480 0 60px, #5a5c58 100px, #232220 125px, #2b2a1c 200px, #33281c 260px, #222420 330px, #4a4e4a 420px);
`;

const PopClose = styled.button`
  display: grid;
  place-items: center;
  align-self: flex-start;
  width: 49px;
  height: 19px;
  margin-left: auto;
  border: 1px solid #a0a4a0;
  border-top: 0;
  border-radius: 0 0 5px 5px;
`;

const PopBody = styled.div`
  display: grid;
  grid-template-columns: 1fr 37px;
  border: 1px solid #000;
  background: #000;
`;

const PopCanvas = styled.svg`
  display: block;
  width: 100%;
  height: 416px;
  border: solid;
  border-width: 4px 3px 3px 4px;
  border-color: #376e62 #b4f0e0 #b4f0e0 #376e62;
`;

const PopTools = styled.div`
  display: flex;
  flex-direction: column;
  gap: 2px;
  padding: 2px 1px;
  background: linear-gradient(#000 0 247px, ${TEAL} 247px);
`;

const PopTool = styled.button`
  display: grid;
  place-items: center;
  width: 34px;
  height: 33px;
  padding: 1px;
  border: 2px solid ${TEAL};

  svg {
    ${raised('cyan')}
    border-width: 3px;
  }
`;

const PopFooter = styled.div`
  display: grid;
  grid-column: 1 / -1;
  height: 28px;
  margin-top: 1px;
  padding: 2px;
  background: ${TEAL};
`;

const popIcons: { name: string; d: string; line?: string }[] = [
  { name: 'Undock', d: '', line: 'M4 8.500 H11 V15.500 H4 Z M14.500 3.500 H18.500 V8.500 H14.500 Z M6 12 H15 V9 M8 10 L6 12 L8 14' },
  { name: 'Pan up', d: 'M11 2 L17 8 H14 V13 H8 V8 H5 Z', line: 'M7 10 H4 V18 H18 V10 H15' },
  { name: 'Pan down', d: 'M11 20 L17 14 H14 V9 H8 V14 H5 Z', line: 'M7 12 H4 V4 H18 V12 H15' },
  { name: 'Pan left', d: 'M2 11 L8 5 V8 H13 V14 H8 V17 Z', line: 'M10 7 V4 H18 V18 H10 V15' },
  { name: 'Pan right', d: 'M20 11 L14 5 V8 H9 V14 H14 V17 Z', line: 'M12 7 V4 H4 V18 H12 V15' },
  { name: 'Zoom in', d: 'M6 2 H16 L11 7 Z M6 20 H16 L11 15 Z M2 6 L7 11 L2 16 Z M20 6 L15 11 L20 16 Z', line: 'M9 9 H13 V13 H9 Z M2 2 L6 6 M20 2 L16 6 M2 20 L6 16 M20 20 L16 16' },
  { name: 'Zoom out', d: 'M11 2 L16 7 H6 Z M11 20 L16 15 H6 Z M2 11 L7 6 V16 Z M20 11 L15 6 V16 Z', line: 'M9 9 H13 V13 H9 Z' },
];

const viaRow = [
  237, 244, 251, 260, 266, 275, 310, 319, 325, 335, 372, 382, 389, 399, 432, 442, 448, 459, 497, 507, 513, 524, 557, 567,
  574, 584, 611,
].map((x): Dot => ({ x: x - 1, y: 583, w: 3, h: 3, c: '#8c9020' }));

const looseVias = [
  [598, 472],
  [598, 500],
  [611, 528],
  [598, 570],
  [280, 624],
  [337, 627],
  [399, 614],
  [399, 633],
  [460, 613],
  [460, 632],
  [524, 612],
  [524, 631],
  [581, 611],
  [581, 630],
  [597, 642],
  [604, 642],
  [611, 642],
  [222, 589],
  [222, 598],
].map(([x, y]): Dot => ({ x: x - 1, y: y - 1, w: 3, h: 3, c: '#8c9020' }));

function Popview() {
  return (
    <PopWindow>
      <WindowTitle>
        <AppIcon />
        Popview - 1
        <PopClose aria-label="Close window">
          <svg width="12" height="10">
            <path d="M2 1 L10 9 M10 1 L2 9" stroke="#fff" strokeWidth="3" />
          </svg>
        </PopClose>
      </WindowTitle>
      <PopBody>
        <PopCanvas>
          <g transform="translate(-222 -237)">
            <CadText x="233" y="449" fontSize="15">
              {'Pressfit holes:23.62mil  Tolerance:+/-2mil'}
            </CadText>
            <path d="M222 457.500 H622" stroke="#9a6fd8" />
            {Array.from({ length: 180 }, (_, i) => {
              const x = Math.round(225 + (i % 20) * 18.52);
              const y = Math.round(469 + Math.floor(i / 20) * 11.08);
              return (
                <g key={i}>
                  <circle cx={x} cy={y} r="3" fill="#a89018" />
                  <path d={`M${x + 2.500} ${y - 2} v4`} stroke="#4c9212" />
                  <circle cx={x} cy={y} r="1.400" fill="#e03a10" />
                </g>
              );
            })}
            <Dots dots={[...viaRow, ...looseVias]} />
            <ellipse cx="622" cy="501" rx="7" ry="11" fill="#ff0000" />
            <ellipse cx="622" cy="612" rx="7" ry="11" fill="#ff0000" />
            <path d="M620.500 490 V512 M620.500 600 V623" stroke="#a09020" />
          </g>
        </PopCanvas>
        <PopTools>
          {popIcons.map((icon) => (
            <PopTool key={icon.name} aria-label={icon.name}>
              <svg width="28" height="28" viewBox="0 0 22 22">
                <path d="M0.500 0.500 H21.500 V21.500 H0.500 Z" fill="none" stroke="#000" />
                <path d={icon.d} />
                <path d={icon.line} fill="none" stroke="#000" strokeWidth="1.500" />
              </svg>
            </PopTool>
          ))}
        </PopTools>
        <PopFooter>
          <BevelButton>Close</BevelButton>
        </PopFooter>
      </PopBody>
    </PopWindow>
  );
}

const DrillWindow = styled(FloatingWindow)`
  top: 90px;
  right: 45px;
  left: 776px;
  padding: 0 6px 6px;
  background: linear-gradient(90deg, transparent 98%, #6f9f72 98%), linear-gradient(#70756f, #999 196px, #0c0e0c 197px, #0c0e0c 96%, #86b868 97%);
  box-shadow: 2px 3px 8px rgba(0, 0, 0, 0.7);
`;

const DrillTitle = styled(WindowTitle)`
  height: 27px;
  margin: 0 -6px;
  padding: 0 3px 2px 6px;
  border-radius: 6px 6px 0 0;
  background: linear-gradient(90deg, #7a7d7a 0, #858885 110px, #1a1e1a 160px, #101410 220px, #000 300px, #1a201a 350px, #0c0f0c 560px, #555c55 660px, #a8bca8 700px);
`;

const WindowControls = styled.div`
  display: flex;
  align-self: flex-start;
  height: 18px;
  margin-left: auto;
  overflow: hidden;
  border: 1px solid #d8e0d8;
  border-top: 0;
  border-radius: 0 0 5px 5px;
`;

const WindowControl = styled.button<{ $close?: boolean }>`
  display: grid;
  place-items: center;
  width: ${({ $close }) => ($close ? 47 : 28)}px;
  border-right: 1px solid #c8d4c8;
  background: ${({ $close }) =>
    $close ? 'linear-gradient(#e0a090, #c04030 50%, #a82010 55%, #d05030)' : 'linear-gradient(#b8ccb8, #6f8f74)'};
`;

const DrillBody = styled.div`
  position: relative;
  border: 1px solid #000;
  background: ${TEAL};
`;

const FormRow = styled.div<{ $columns: string; $height: number }>`
  display: grid;
  grid-template-columns: ${({ $columns }) => $columns};
  height: ${({ $height }) => $height}px;
`;

const FormCell = styled.div<{ $tone?: Tone }>`
  display: flex;
  align-items: center;
  min-width: 0;
  padding: 1px 2px;
  border: solid #000;
  border-width: 0 1px 1px 0;
  background: ${({ $tone = 'teal' }) => tones[$tone].bg};
  white-space: pre;

  & > ${BevelButton} {
    flex: 1;
    height: 100%;
  }
`;

const StartButton = styled(BevelButton)`
  justify-content: flex-start;
  padding-left: 2px;
`;

const FieldLabel = styled.label`
  flex: none;
  padding: 0 6px 0 1px;
`;

const SlotsCell = styled(FormCell)`
  border-left-width: 1px;
`;

const Grow = styled.div`
  flex: 1;
  min-width: 0;
`;

const ThicknessField = styled(TextField)`
  width: 104px;
  height: 23px;
  padding-bottom: 2px;
`;

const ShortField = styled(TextField)`
  height: 25px;
  padding-bottom: 4px;
`;

const GridArea = styled.div`
  display: grid;
  grid-template-columns: 1fr 15px;
  margin: 1px 1px 0 0;
`;

const GridView = styled.div`
  height: 502px;
  min-width: 0;
  margin-right: 1px;
  overflow: hidden;
  border: solid;
  border-width: 2px 4px 2px 3px;
  border-color: ${TEAL_DARK} ${TEAL_LIGHT} ${TEAL_LIGHT} ${TEAL_DARK};
`;

const ToolTable = styled.table`
  width: 100%;
  min-width: 749px;
  border-spacing: 0;
  table-layout: fixed;

  th {
    height: 39px;
    padding: 0;
    border-bottom: 3px solid ${TEAL};
    border-left: 2px solid #000;
    background: ${AQUA};
    background-clip: padding-box;
    box-shadow: inset 0 -1px 0 #000, inset 0 1px 0 #000;
    line-height: 15px;
    white-space: pre-line;
  }

  td {
    height: 33px;
    padding: 0 2px;
    border-top: 2px solid #000;
    border-left: 2px solid #000;
  }
`;

const ToneCell = styled.td<{ $tone: Tone; $right?: boolean }>`
  background: ${({ $tone }) => tones[$tone].bg};
  text-align: ${({ $right }) => ($right ? 'right' : 'left')};
`;

const TypeCell = styled(ToneCell)`
  && {
    padding-left: 5px;
  }
`;

const ToolButton = styled(StartButton)`
  width: 100%;
  height: 27px;
`;

const Highlight = styled.div`
  position: absolute;
  top: 234px;
  right: 51px;
  left: 231px;
  height: 38px;
  border: 4px solid #f00;
  box-shadow: 2px 2px 5px rgba(0, 0, 0, 0.6), inset 2px 2px 5px rgba(0, 0, 0, 0.5);
  pointer-events: none;
`;

const HScroll = styled.div`
  margin: 4px 20px 4px 2px;
`;

const ToolBar = styled.div`
  display: flex;
  height: 36px;
  border: solid #000;
  border-width: 2px 0;
`;

const CurrentTool = styled.div`
  flex: none;
  width: 41px;
  padding: 7px 0 0 3px;
  border: 1px solid #000;
  background: ${GOLD};
  font-size: 12px;
`;

const StepCell = styled(FormCell)`
  flex: none;

  & > ${BevelButton} {
    padding-left: 1px;
  }
`;

const IndexField = styled(TextField)`
  width: 58px;
`;

const IconButton = styled(BevelButton)`
  width: 25px;
`;

const UnitCell = styled(FormCell)`
  flex: none;
  width: 86px;
  padding-left: 6px;
  border-left-width: 1px;
`;

const ModeCell = styled(FormCell)`
  flex: none;
  width: 116px;
  padding-left: 6px;
`;

const FillMenu = styled.div`
  flex: 1;
`;

const MergeMenu = styled.div`
  width: 214px;
  margin-right: 4px;
`;

const MergeButton = styled(BevelButton)`
  && {
    flex: none;
    width: 54px;
  }
`;

const ActionRow = styled(FormRow)`
  margin-top: 2px;
  border-top: 2px solid #000;
`;

const FooterRow = styled.div`
  display: grid;
  grid-template-columns: repeat(4, 1fr);
  height: 29px;
`;

const columns: [string, number][] = [
  ['', 26],
  ['Tool', 68],
  ['Count', 60],
  ['Slot\nLen(ml)', 83],
  ['Type', 115],
  ['Finish\nSize(ml)', 83],
  ['+Tol\n(ml)', 74],
  ['-Tol\n(ml)', 74],
  ['Drill\nSize(ml)', 83],
  ['Drill\nDes', 83],
];

function SymbolIcon({ letter }: { letter: string }) {
  return (
    <svg width="20" height="20" viewBox="0 0 20 20" display="block">
      <rect x="0.500" y="0.500" width="19" height="19" fill="#fff" stroke="#000" />
      <path d="M4 10.500 H15 M9.500 5 V16" stroke="#000" />
      <text x="14" y="7" fontSize="8" fontWeight="normal">
        {letter}
      </text>
    </svg>
  );
}

function DrillTable() {
  return (
    <ToolTable>
      <colgroup>
        {columns.map(([title, width]) => (
          <col key={title} width={width} />
        ))}
      </colgroup>
      <thead>
        <tr>
          {columns.map(([title]) => (
            <th key={title}>{title}</th>
          ))}
        </tr>
      </thead>
      <tbody>
        {tools.map((tool, index) => (
          <tr key={tool.id}>
            <ToneCell $tone="teal">
              <SymbolIcon letter={String.fromCharCode(65 + index)} />
            </ToneCell>
            <ToneCell $tone="teal">
              <ToolButton $tone={tool.id === CURRENT_TOOL ? 'gold' : 'teal'}>{tool.id}</ToolButton>
            </ToneCell>
            <ToneCell $tone="teal" $right>
              {tool.count}
            </ToneCell>
            <ToneCell $tone="white">
              <TextField $tone="white" $focused={tool.id === FOCUSED_TOOL} aria-label={`${tool.id} slot length`} />
            </ToneCell>
            <TypeCell $tone="cream">
              <OptionMenu label={`${tool.id} type`} value={tool.type} tone="cream" />
            </TypeCell>
            <ToneCell $tone="cream">
              <TextField $tone="cream" defaultValue={tool.finish} aria-label={`${tool.id} finish size`} />
            </ToneCell>
            <ToneCell $tone="cream">
              <TextField $tone="cream" defaultValue="0" aria-label={`${tool.id} plus tolerance`} />
            </ToneCell>
            <ToneCell $tone="cream">
              <TextField $tone="cream" defaultValue="0" aria-label={`${tool.id} minus tolerance`} />
            </ToneCell>
            <ToneCell $tone="white">
              <TextField $tone="white" defaultValue={tool.drill} aria-label={`${tool.id} drill size`} />
            </ToneCell>
            <ToneCell $tone="white">
              <TextField $tone="white" aria-label={`${tool.id} drill designator`} />
            </ToneCell>
          </tr>
        ))}
      </tbody>
    </ToolTable>
  );
}

const stepIcons = [
  { name: 'Highlight', d: 'M6 14 V11 C2 8 3 3 7.500 3 C12 3 13 8 9 11 V14 Z M6 16 H9', red: '' },
  { name: 'Zoom to', d: 'M3 3 H11 L6 8 L11 12 V16 M3 13 L5 11 L7 16 L9 13', red: '' },
  { name: 'Clear', d: 'M6 14 V11 C2 8 3 3 7.500 3 C12 3 13 8 9 11 V14 Z M6 16 H9', red: 'M1 1 L14 17 M14 1 L1 17' },
];

function DrillToolManager() {
  return (
    <DrillWindow>
      <DrillTitle>
        <AppIcon />
        Drill Tool Manager
        <WindowControls>
          <WindowControl aria-label="Minimize">
            <svg width="12" height="10">
              <path d="M0.500 6.500 H11.500 V9.500 H0.500 Z" fill="#fff" stroke="#556" />
            </svg>
          </WindowControl>
          <WindowControl aria-label="Maximize">
            <svg width="12" height="10">
              <path d="M1.500 1.500 H10.500 V8.500 H1.500 Z" fill="#667" stroke="#fff" strokeWidth="2" />
            </svg>
          </WindowControl>
          <WindowControl $close aria-label="Close window">
            <svg width="12" height="10">
              <path d="M2 1 L10 9 M10 1 L2 9" stroke="#fff" strokeWidth="3" />
            </svg>
          </WindowControl>
        </WindowControls>
      </DrillTitle>
      <DrillBody>
        <FormRow $columns="167px 109px 1fr 187px 151px" $height={34}>
          <FormCell>
            <StartButton>{'Layer          :'}</StartButton>
          </FormCell>
          <FormCell $tone="cyan">
            <TextField aria-label="Layer" defaultValue="drl" />
          </FormCell>
          <FormCell />
          <SlotsCell $tone="cyan">
            <FieldLabel>{' Slots:'}</FieldLabel>
            <Grow>
              <OptionMenu label="Slots" value="Yes" center />
            </Grow>
          </SlotsCell>
          <div />
        </FormRow>
        <FormRow $columns="307px 178px 129px 1fr" $height={29}>
          <FormCell $tone="cyan">
            <FieldLabel htmlFor="thickness">Board Thickness : </FieldLabel>
            <ThicknessField id="thickness" defaultValue="62.992" /> ml
          </FormCell>
          <FormCell>
            <StartButton>User Parameters :</StartButton>
          </FormCell>
          <FormCell $tone="cyan">
            <ShortField aria-label="User parameters" defaultValue="no_hasl" />
          </FormCell>
          <div />
        </FormRow>
        <GridArea>
          <GridView>
            <DrillTable />
          </GridView>
          <ScrollBar before={0} thumb={282} after={191} />
        </GridArea>
        <HScroll>
          <ScrollBar horizontal before={0} thumb={635} after={78} />
        </HScroll>
        <ToolBar>
          <CurrentTool>T05</CurrentTool>
          <StepCell />
          {['First', '<--', '-->', 'Last'].map((label) => (
            <StepCell key={label}>
              <BevelButton>{label}</BevelButton>
            </StepCell>
          ))}
          <StepCell>
            <FieldLabel htmlFor="tool-index">Index:</FieldLabel>
            <IndexField id="tool-index" $tone="teal" />
          </StepCell>
          {stepIcons.map((icon) => (
            <FormCell key={icon.name}>
              <IconButton aria-label={icon.name}>
                <svg width="16" height="18" viewBox="0 0 16 18" fill="none" stroke="#000">
                  <path d="M0.500 0.500 H15.500 V17.500 H0.500 Z" />
                  <path d={icon.d} />
                  <path d={icon.red} stroke="#e02020" strokeWidth="2" />
                </svg>
              </IconButton>
            </FormCell>
          ))}
          <Grow />
          <UnitCell $tone="cyan">
            <FillMenu>
              <OptionMenu label="Units" value="ml/my" />
            </FillMenu>
          </UnitCell>
          <ModeCell $tone="cyan">
            <FillMenu>
              <OptionMenu label="Mode" value="Regular" />
            </FillMenu>
          </ModeCell>
        </ToolBar>
        <ActionRow $columns="214px 131px 1fr" $height={35}>
          <FormCell />
          <FormCell>
            <BevelButton>Combine Tools</BevelButton>
          </FormCell>
          <FormCell $tone="cyan">
            <FieldLabel>{' Merge Tools :'}</FieldLabel>
            <Grow />
            <MergeMenu>
              <OptionMenu label="Merge tools" value="Update Tools Numbers" />
            </MergeMenu>
            <MergeButton>Merge</MergeButton>
          </FormCell>
        </ActionRow>
        <FooterRow>
          {['Apply', 'Calc Drills', 'Update Table', 'Close'].map((label) => (
            <FormCell key={label}>
              <BevelButton>{label}</BevelButton>
            </FormCell>
          ))}
        </FooterRow>
        <Highlight />
      </DrillBody>
    </DrillWindow>
  );
}

/* ---------- taskbar ---------- */

const TaskBar = styled.footer`
  display: flex;
  flex: none;
  align-items: center;
  height: 40px;
  border-top: 1px solid #7fc8c4;
  background: linear-gradient(90deg, #0d5f66 0, #16746e 25%, #0f6a6c 45%, #14505c 70%, #0c3244 85%, #0a2436 100%);
  color: #fff;
  font: 13px/18px 'Open Sans', 'Noto Sans CJK SC', sans-serif;
`;

const StartOrb = styled.button`
  display: grid;
  margin: 0 19px 0 8px;
`;

const TaskGroup = styled.div`
  display: flex;
  gap: 1px;
  margin-left: 3px;
`;

const TaskButton = styled.button<{ $active?: boolean }>`
  display: flex;
  flex: none;
  align-items: center;
  gap: 4px;
  width: 108px;
  height: 38px;
  padding-left: 5px;
  border: 1px solid rgba(190, 240, 230, 0.6);
  border-radius: 3px;
  background: ${({ $active }) =>
    $active
      ? 'linear-gradient(150deg, #c4dcd4, #8fb8ac 50%, #5c968c)'
      : 'linear-gradient(165deg, rgba(200,230,220,0.6), rgba(80,150,140,0.5) 50%, rgba(30,110,104,0.6))'};
  white-space: nowrap;
`;

const Tray = styled.div`
  display: flex;
  align-items: center;
  gap: 1px;
  margin-left: auto;
`;

const TrayClock = styled.time`
  width: 74px;
  text-align: center;
`;

const ShowDesktop = styled.button`
  width: 14px;
  height: 39px;
  border: 1px solid #6f9a9f;
  background: linear-gradient(135deg, #6f9a9f, #123844 60%);
`;

const taskIcons: Record<string, ReactNode> = {
  shell: (
    <>
      <path d="M16 29 L3 20 C-2 8 8 1 16 3 C24 1 34 8 29 20 Z" fill="#f6d09a" stroke="#c98a4a" />
      <path d="M16 28 L7 7 M16 28 L12 4 M16 28 L20 4 M16 28 L25 7 M16 28 L3 14 M16 28 L29 14" stroke="#d89a50" />
      <path d="M20 12 L22.500 18 L30 18 L25 22 L27 30 L20 26 L13 30 L15 22 L10 18 L17.500 18 Z" fill="#f08030" stroke="#b85010" />
    </>
  ),
  get: (
    <>
      <path d="M1 12 C6 8 10 26 22 30 C10 31 2 24 1 12 Z" fill="#1a3060" stroke="#8090b0" />
      <ellipse cx="18" cy="19" rx="13" ry="10" fill="#14525e" stroke="#0a1c30" />
      <ellipse cx="19" cy="17" rx="12" ry="9" fill="#1f9aa0" />
      <ellipse cx="19" cy="16" rx="6" ry="5" fill="#b8d860" />
      <ellipse cx="19" cy="16" rx="3" ry="2.500" fill="#146070" />
      <path d="M0 6 L6 1 L12 6 Z" fill="#18b0a8" />
    </>
  ),
  disk: (
    <>
      <path d="M2 2 H28 L31 5 V31 H2 Z" fill="#2048c8" />
      <rect x="9" y="2" width="14" height="10" fill="#d8dce8" />
      <rect x="17" y="3" width="4" height="8" fill="#2048c8" />
      <rect x="6" y="16" width="21" height="15" fill="#fff" />
      <path d="M8 20 H25 M8 24 H25 M8 28 H25" stroke="#c05050" />
    </>
  ),
  doc: (
    <>
      <path d="M5 2 H27 L29 30 H3 Z" fill="#eef4fc" stroke="#6080b0" />
      <path d="M5 2 H27 V6 H5 Z" fill="#5088d0" />
      <path d="M7 20 L11 9 L15 20 M8.500 16 H13.500" fill="none" stroke="#e07020" strokeWidth="2.500" />
      <path d="M18 10 H25 M18 14 H25 M18 18 H25 M7 24 H25 M7 27 H25" stroke="#5088d0" />
    </>
  ),
  green: (
    <>
      <path d="M8 4 L12 2 H30 L24 16 H16 L12 31 H4 Z" fill="#0a7a3a" />
      <path d="M14 8 H24 L21 13 H16 L15 19 L10 29 Z" fill="#30c060" />
    </>
  ),
  excel: (
    <>
      <rect x="3" y="2" width="26" height="28" fill="#eef8ea" stroke="#3a7a3a" strokeWidth="2" />
      <path d="M8 7 L22 25 M23 7 L8 25" stroke="#2a8a30" strokeWidth="5" />
      <path d="M9 7 L22 24" stroke="#7cc070" strokeWidth="1.500" />
    </>
  ),
  blue: (
    <>
      <rect x="1" y="1" width="30" height="30" rx="3" fill="#0f5cb8" />
      <path d="M9 9 C11 5 15 5 27 5 L24 11 H15 L13 15 H23 L20 20 H12 C11 26 8 27 5 27 Z" fill="#fff" />
    </>
  ),
};

function TaskIcon({ name }: { name: string }) {
  if (name === 'x') {
    return <AppIcon size={30} />;
  }
  return (
    <svg width="32" height="32" viewBox="0 0 32 32">
      {taskIcons[name]}
    </svg>
  );
}

const taskGroups = [
  [{ icon: 'shell', label: '兴森快捷...' }],
  [{ icon: 'get', label: 'get - 快...' }],
  [
    { icon: 'x', label: 'Enginee...' },
    { icon: 'x', label: 'Progress' },
    { icon: 'x', label: 'Graphic...' },
    { icon: 'x', label: 'Drill To...', active: true },
  ],
  [{ icon: 'disk', label: 'Total C...' }],
  [{ icon: 'doc', label: 'cg00a0...' }],
  [{ icon: 'green', label: '工程系统...' }],
  [{ icon: 'excel', label: 'Microso...' }],
  [{ icon: 'blue', label: '张自强' }],
];

function WindowsTaskBar() {
  return (
    <TaskBar>
      <StartOrb aria-label="Start">
        <svg width="38" height="38" viewBox="0 0 38 38">
          <defs>
            <radialGradient id="orb" cx="50%" cy="35%">
              <stop offset="0" stopColor="#7fd0f0" />
              <stop offset="0.700" stopColor="#1c5c90" />
              <stop offset="1" stopColor="#8cc0d0" />
            </radialGradient>
          </defs>
          <circle cx="19" cy="19" r="18" fill="url(#orb)" stroke="#0c3c50" />
          <path d="M10 12 Q14 9 18 11 L16.500 18 Q12.500 16 8.500 18 Z" fill="#f06a28" />
          <path d="M20 12 Q24 14 29 11 L27 18 Q23 20 18.500 18 Z" fill="#9cd040" />
          <path d="M8 20 Q12 18 16 20 L14.500 27 Q10.500 25 6.500 27 Z" fill="#48a8f0" />
          <path d="M18 20 Q22 22 26.500 20 L25 27 Q21 29 16.500 27 Z" fill="#fcd030" />
        </svg>
      </StartOrb>
      <StartOrb aria-label="Calculator">
        <svg width="24" height="30" viewBox="0 0 24 30">
          <rect x="0.500" y="0.500" width="23" height="29" rx="2" fill="#a8cce4" stroke="#5f90b0" />
          <rect x="3" y="3" width="18" height="8" fill="#e8f4fc" stroke="#5f90b0" />
          <path d="M4 14.500 H20 M4 18.500 H20 M4 22.500 H20 M4 26.500 H20" stroke="#fff" strokeWidth="3" strokeDasharray="3 1" />
          <rect x="17" y="21" width="3" height="7" fill="#f0a030" />
        </svg>
      </StartOrb>
      {taskGroups.map((group, index) => (
        <TaskGroup key={index}>
          {group.map((task) => (
            <TaskButton key={task.label} $active={'active' in task}>
              <TaskIcon name={task.icon} />
              {task.label}
            </TaskButton>
          ))}
        </TaskGroup>
      ))}
      <Tray>
        <svg width="152" height="20" viewBox="0 0 152 20">
          <path d="M2 12 L6 7 L10 12 Z" fill="#fff" />
          <path d="M24 18 L32 4 L33 18 Z" fill="#e02010" />
          <path d="M33 4 L41 18 H36 Z" fill="#18a030" />
          <path d="M54 18 C56 8 54 4 60 4 H70 L67 8 H62 L61 10 H67 L65 13 H60 Z" fill="#2090f0" />
          <path d="M92 3 C84 2 80 6 80 12 C80 20 92 20 92 13 C92 9 86 9 84 12 C83 8 88 6 92 3 Z" fill="#d02818" />
          <path d="M103 3 V19" stroke="#fff" strokeWidth="2" />
          <path d="M104 4 H113 V12 H104 Z" fill="#fff" />
          <circle cx="113" cy="14" r="5" fill="#d02020" />
          <path d="M111 12 L115 16 M115 12 L111 16" stroke="#fff" strokeWidth="1.500" />
          <path d="M128 6 H140 V14 H128 Z M131 18 H138 M134 14 V18 M126 3 V9" fill="none" stroke="#fff" strokeWidth="1.500" />
        </svg>
        <svg width="20" height="20" viewBox="0 0 20 20" fill="none" stroke="#fff">
          <path d="M0 8 H3 L7 4 V16 L3 12 H0 Z" fill="#fff" />
          <path d="M9 7 Q11 10 9 13 M11 5 Q15 10 11 15 M13 3 Q18 10 13 17" />
        </svg>
        <TrayClock>
          21:20
          <br />
          2016/5/6
        </TrayClock>
        <ShowDesktop aria-label="Show desktop" />
      </Tray>
    </TaskBar>
  );
}

export default function App() {
  return (
    <Desktop>
      <GlobalStyle />
      <EditorWindow>
        <EditorTitle>
          <AppIcon />
          Graphic Editor 9.07b2 (00@HY-HYCAM-PC083 - Windows, pid:3204)
          <EditorControls>
            <EditorControl aria-label="Minimize editor">
              <svg width="12" height="8">
                <path d="M1 5 H11" stroke="#fff" strokeWidth="3" />
              </svg>
            </EditorControl>
            <EditorControl aria-label="Maximize editor">
              <svg width="10" height="8">
                <path d="M1 0 V7 H9 V0" fill="none" stroke="#fff" strokeWidth="2" />
              </svg>
            </EditorControl>
            <EditorControl $wide aria-label="Close editor">
              <svg width="10" height="8">
                <path d="M1 7 L5 3 L9 7 M3 0 L5 3 L7 0" fill="none" stroke="#fff" strokeWidth="2" />
              </svg>
            </EditorControl>
          </EditorControls>
        </EditorTitle>
        <EditorFrame>
          <TopRow>
            <MenuBar>
              {menus.map(([name, key]) => (
                <MenuItem key={name}>
                  {key < 0 ? (
                    name
                  ) : (
                    <>
                      {name.slice(0, key)}
                      <span>{name[key]}</span>
                      {name.slice(key + 1)}
                    </>
                  )}
                </MenuItem>
              ))}
              <MenuItem $end>Help</MenuItem>
            </MenuBar>
            <Brand>
              <FrontlineLogo />
              <Product>
                Genesis 2000
                <ProductSub>Graphic Editor</ProductSub>
              </Product>
              <Clock>
                06 May 2016
                <br />
                08:53 PM
              </Clock>
            </Brand>
          </TopRow>
          <MainRow>
            <LeftPart>
              <WorkRow>
                <LayerPanel />
                <Board />
              </WorkRow>
              <CommandRow />
            </LeftPart>
            <ToolPalette />
          </MainRow>
          <StatusBar>
            <StatusText>
              bo.d,#116,Line,XS=0.38905,YS=0.4842701,XE=0.38072,YE=0.4582701,r4,POS,Ang=-72.24
            </StatusText>
          </StatusBar>
        </EditorFrame>
      </EditorWindow>
      <WindowsTaskBar />
      <Popview />
      <DrillToolManager />
    </Desktop>
  );
}
